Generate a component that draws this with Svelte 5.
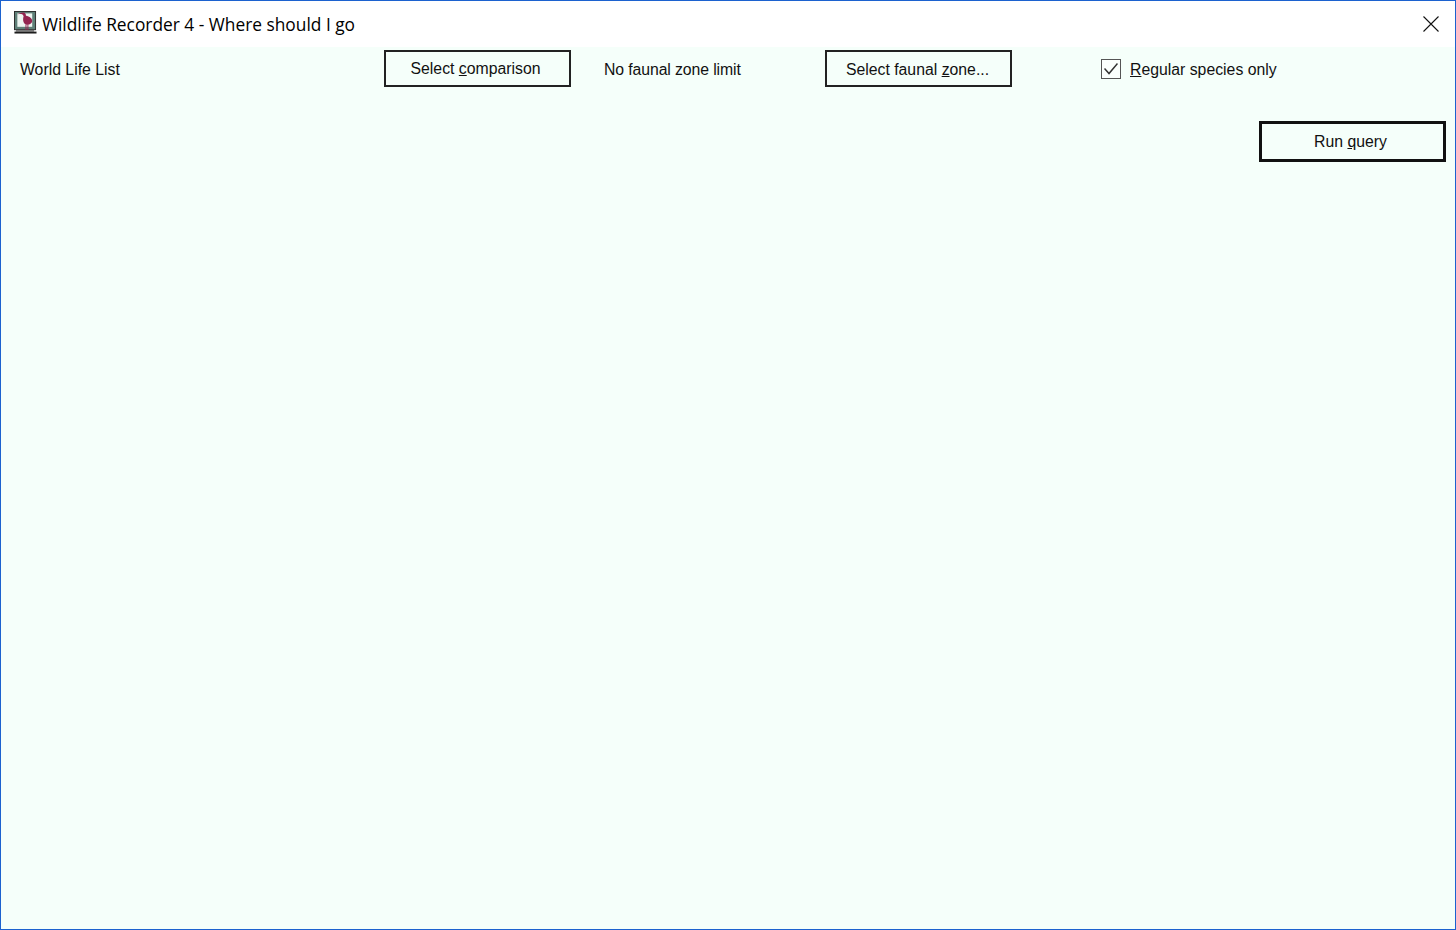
<script>
	const title = 'Wildlife Recorder 4 - Where should I go';
</script>

<div class="window">
	<header class="title-bar">
		<svg class="app-icon" viewBox="0 0 24 24" width="23" height="23">
			<rect x="0.5" y="0.5" width="22" height="19" fill="#5f8078" stroke="#2a2a2a" stroke-width="1" />
			<rect x="3.5" y="2.5" width="15.5" height="14" fill="#eef5f1" />
			<path d="M3.5 3.5 C6 2 8 1.5 10.5 1.5 C12 2 12.5 3.5 12.5 5 C16 5.5 19.5 8 19 11 C18.5 13.5 15 15 12.5 14 C9.5 13 9 9 10 5.5 C9.5 4 8.5 3.2 7.5 3.2 C6 3.2 5 3.4 3.5 3.5 Z" fill="#93254f" />
			<path d="M12.5 14 V20 M14.5 14 V20" stroke="#93254f" stroke-width="1" />
			<rect x="2" y="20" width="19" height="1.5" fill="#666" />
			<rect x="0.5" y="21.5" width="23" height="2" fill="#1c1c1c" />
		</svg>
		<span class="title">{title}</span>
		<svg class="close" viewBox="0 0 16 16" width="16" height="16">
			<path d="M0.5 0.5 L15.5 15.5 M15.5 0.5 L0.5 15.5" stroke="#111" stroke-width="1.1" fill="none" />
		</svg>
	</header>

	<main class="content">
		<div class="options">
			<span class="label list-name">World Life List</span>
			<button class="btn"><span class="nudge-compare">Select <u>c</u>omparison</span></button>
			<span class="label zone-name">No faunal zone limit</span>
			<button class="btn"><span class="nudge-zone">Select faunal <u>z</u>one...</span></button>
			<label class="check">
				<span class="box">
					<svg viewBox="0 0 14 14" width="14" height="14">
						<path d="M0.5 6.5 L5 11.5 L13.5 1.5" stroke="#333" stroke-width="1.5" fill="none" />
					</svg>
				</span>
				<span class="check-text"><u>R</u>egular species only</span>
			</label>
		</div>
		<div class="actions">
			<button class="btn primary"><span class="nudge-run">Run <u>q</u>uery</span></button>
		</div>
	</main>
</div>

<style>
	:global(body) {
		margin: 0;
		background: #f5fffa;
	}

	.window {
		box-sizing: border-box;
		width: 1456px;
		height: 930px;
		border: 1px solid #1c62cf;
		display: flex;
		flex-direction: column;
		font-family: 'Liberation Sans', Arial, sans-serif;
		color: #111;
	}

	.title-bar {
		height: 46px;
		flex-shrink: 0;
		background: #fff;
		display: flex;
		align-items: center;
		padding: 0 16px 0 12px;
	}

	.app-icon {
		flex-shrink: 0;
		margin-top: -3px;
		margin-left: 1px;
	}

	.title {
		margin-left: 5px;
		font-family: 'Open Sans', 'Noto Sans', sans-serif;
		font-size: 17.33px;
		color: #000;
		flex: 1;
	}

	.close {
		flex-shrink: 0;
		margin-top: -1px;
	}

	.content {
		flex: 1;
		background: #f5fffa;
		padding: 3px 9px 0 19px;
	}

	.options {
		display: flex;
		align-items: center;
		height: 37px;
	}

	.label,
	.check-text {
		font-size: 15.8px;
		padding-top: 2px;
	}

	.list-name {
		width: 364px;
		flex-shrink: 0;
	}

	.zone-name {
		width: 254px;
		padding-left: 33px;
		box-sizing: border-box;
		flex-shrink: 0;
		letter-spacing: -0.1px;
	}

	.btn {
		box-sizing: border-box;
		width: 187px;
		height: 37px;
		border: 2px solid #222;
		background: #f5fffa;
		font-family: inherit;
		font-size: 15.8px;
		color: inherit;
		padding: 1px 0 0;
		flex-shrink: 0;
	}

	.nudge-compare,
	.nudge-zone,
	.nudge-run {
		position: relative;
	}

	.nudge-compare {
		left: -2px;
	}

	.nudge-zone {
		top: 1px;
		left: -1px;
	}

	.nudge-run {
		left: -2px;
	}

	.check {
		display: flex;
		align-items: center;
		gap: 9px;
		margin-left: 89px;
		padding-top: 1px;
	}

	.box {
		box-sizing: border-box;
		width: 20px;
		height: 20px;
		border: 1px solid #555;
		display: flex;
		align-items: center;
		justify-content: center;
		background: #fbfffd;
	}

	.actions {
		display: flex;
		justify-content: flex-end;
		margin-top: 34px;
	}

	.primary {
		height: 41px;
		border: 3px solid #111;
	}
</style>
